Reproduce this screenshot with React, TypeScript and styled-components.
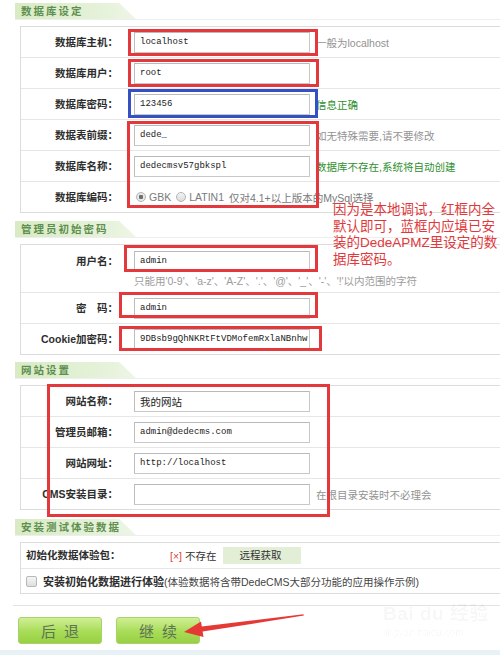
import React from "react";
import styled, { createGlobalStyle } from "styled-components";

const Global = createGlobalStyle`
  html, body { margin: 0; padding: 0; background: #fff; }
  body { width: 500px; height: 655px; overflow: hidden; }
`;

const Page = styled.div`
  position: relative;
  width: 500px;
  height: 655px;
  overflow: hidden;
  background: #fff;
  font-family: "Liberation Sans", "Noto Sans CJK SC", sans-serif;
  color: #333;
  display: flex;
  flex-direction: column;
`;

const Section = styled.section<{ $top: number }>`
  margin-top: ${(p) => p.$top}px;
  padding-left: 15px;
`;

const TabBar = styled.div`
  height: 16px;
  border-bottom: 1px solid #eeeeee;
  display: flex;
`;

const Tab = styled.h2`
  margin: 0;
  width: 121px;
  height: 16px;
  padding-left: 6px;
  box-sizing: border-box;
  background: linear-gradient(to right, #d8ebc4, #e6f2da 75%, #eef6e6);
  clip-path: polygon(0 0, 86% 0, 100% 100%, 0 100%);
  font: bold 10.5px/16px "Noto Sans CJK SC", sans-serif;
  letter-spacing: 2px;
  color: #5f8f50;
  white-space: nowrap;
`;

const Table = styled.div`
  margin: 6px 0 0 5px;
  width: 490px;
  border: 1px solid #dcdcdc;
  display: flex;
  flex-direction: column;
  background: #fff;
`;

const Row = styled.div<{ $h?: number; $pad?: number }>`
  display: flex;
  align-items: ${(p) => (p.$pad ? "flex-start" : "center")};
  height: ${(p) => p.$h ?? 30}px;
  padding-top: ${(p) => p.$pad ?? 0}px;
  & + & {
    border-top: 1px solid #e6e6e6;
  }
`;

const Label = styled.div<{ $w?: number; $left?: boolean }>`
  width: ${(p) => p.$w ?? 99}px;
  flex: none;
  box-sizing: border-box;
  padding: 0 2px 0 5px;
  text-align: ${(p) => (p.$left ? "left" : "right")};
  font: bold 10.5px/21px "Liberation Sans", "Noto Sans CJK SC", sans-serif;
  color: #2e2e2e;
  white-space: nowrap;
`;

const Value = styled.div<{ $col?: boolean; $pl?: number }>`
  display: flex;
  flex-direction: ${(p) => (p.$col ? "column" : "row")};
  align-items: ${(p) => (p.$col ? "flex-start" : "center")};
  padding-left: ${(p) => p.$pl ?? 14}px;
  white-space: nowrap;
`;

const Field = styled.div<{ $cjk?: boolean }>`
  width: 176px;
  height: 21px;
  flex: none;
  box-sizing: border-box;
  border: 1px solid #c8c8c8;
  border-top-color: #b9b9b9;
  border-left-color: #bdbdbd;
  padding-left: 5px;
  font: ${(p) =>
    p.$cjk
      ? '10.5px/19px "Noto Sans CJK SC", sans-serif'
      : '9px/19px "Liberation Mono", monospace'};
  color: #222;
  background: #fff;
  overflow: hidden;
`;

const Hint = styled.span<{ $green?: boolean }>`
  margin-left: 6px;
  font-size: 10.5px;
  color: ${(p) => (p.$green ? "#2f8f2f" : "#929292")};
  white-space: nowrap;
`;

const SubHint = styled.div`
  margin-top: 3px;
  font-size: 10.5px;
  line-height: 13px;
  color: #9c9c9c;
  white-space: nowrap;
`;

const RadioGroup = styled.div`
  display: flex;
  align-items: center;
  gap: 3px;
  margin-left: 2px;
  font-size: 10.5px;
  color: #7a7a7a;
`;

const Radio = styled.span<{ $on?: boolean }>`
  width: 8px;
  height: 8px;
  border-radius: 50%;
  border: 1px solid #b4b4b4;
  background: ${(p) =>
    p.$on
      ? "radial-gradient(circle, #6f6f6f 0 2px, #e9e9e9 2.5px)"
      : "linear-gradient(#f4f4f4, #dcdcdc)"};
  flex: none;
`;

const RadioText = styled.span`
  margin-right: 2px;
`;

const Cross = styled.span`
  color: #e0403a;
  font-size: 10.5px;
  margin-right: 3px;
`;

const Plain = styled.span`
  font-size: 10.5px;
  color: #333;
`;

const FetchButton = styled.span`
  margin-left: 7px;
  width: 78px;
  height: 17px;
  box-sizing: border-box;
  padding-left: 16px;
  background: #e3eed7;
  font-size: 10.5px;
  line-height: 17px;
  color: #333;
`;

const Check = styled.span`
  width: 9px;
  height: 9px;
  margin: 0 6px 0 5px;
  border: 1px solid #b8b8b8;
  border-radius: 2px;
  background: linear-gradient(#f6f6f6, #dedede);
  flex: none;
`;

const Strong = styled.b`
  font-size: 11px;
  color: #2e2e2e;
`;

const Normal = styled.span`
  font-size: 10.5px;
  color: #444;
`;

const Divider = styled.div`
  margin: 11px 0 0 13px;
  border-top: 1px solid #e3e3e3;
`;

const ButtonBar = styled.div`
  display: flex;
  gap: 14px;
  margin-top: 11px;
  padding-left: 18px;
`;

const GreenButton = styled.div`
  width: 84px;
  height: 27px;
  box-sizing: border-box;
  border: 1px solid #a8d36a;
  border-radius: 3px;
  background: linear-gradient(#d0ef96, #a8dc57 55%, #98d044);
  color: #5e7256;
  font: 15px/25px "Noto Sans CJK SC", sans-serif;
  letter-spacing: 8px;
  padding-left: 8px;
  text-align: center;
`;

const BottomBand = styled.div`
  margin-top: auto;
  height: 5px;
  background: #e7f1f6;
`;

const Mark = styled.div<{ $x: number; $y: number; $w: number; $h: number; $blue?: boolean }>`
  position: absolute;
  left: ${(p) => p.$x}px;
  top: ${(p) => p.$y}px;
  width: ${(p) => p.$w}px;
  height: ${(p) => p.$h}px;
  box-sizing: border-box;
  border: 3px solid ${(p) => (p.$blue ? "#3550c2" : "#e3383c")};
  pointer-events: none;
`;

const Note = styled.div`
  position: absolute;
  left: 333px;
  top: 202px;
  font: 13.5px/16.5px "Liberation Sans", "Noto Sans CJK SC", sans-serif;
  color: #e0393c;
  white-space: nowrap;
`;

const ArrowSvg = styled.svg`
  position: absolute;
  left: 180px;
  top: 606px;
`;

const Watermark = styled.div`
  position: absolute;
  left: 383px;
  top: 604px;
  color: rgba(0, 0, 0, 0.045);
  font-family: "Liberation Sans", "Noto Sans CJK SC", sans-serif;
  line-height: 1;
`;

const WmBig = styled.div`
  font-size: 19px;
  font-weight: bold;
  letter-spacing: 0.5px;
`;

const WmSmall = styled.div`
  margin-top: 5px;
  font-size: 10px;
`;

const marks = [
  { x: 128, y: 29, w: 190, h: 27 },
  { x: 128, y: 59, w: 191, h: 28 },
  { x: 128, y: 89, w: 190, h: 29, blue: true },
  { x: 127, y: 121, w: 192, h: 87 },
  { x: 124, y: 245, w: 194, h: 27 },
  { x: 119, y: 292, w: 199, h: 26 },
  { x: 119, y: 326, w: 203, h: 25 },
  { x: 47, y: 384, w: 283, h: 133 },
];

export default function App() {
  return (
    <Page>
      <Global />

      <Section $top={3}>
        <TabBar>
          <Tab>数据库设定</Tab>
        </TabBar>
        <Table>
          <Row>
            <Label>数据库主机：</Label>
            <Value>
              <Field>localhost</Field>
              <Hint>一般为localhost</Hint>
            </Value>
          </Row>
          <Row>
            <Label>数据库用户：</Label>
            <Value>
              <Field>root</Field>
            </Value>
          </Row>
          <Row>
            <Label>数据库密码：</Label>
            <Value>
              <Field>123456</Field>
              <Hint $green>信息正确</Hint>
            </Value>
          </Row>
          <Row>
            <Label>数据表前缀：</Label>
            <Value>
              <Field>dede_</Field>
              <Hint>如无特殊需要,请不要修改</Hint>
            </Value>
          </Row>
          <Row>
            <Label>数据库名称：</Label>
            <Value>
              <Field>dedecmsv57gbkspl</Field>
              <Hint $green>数据库不存在,系统将自动创建</Hint>
            </Value>
          </Row>
          <Row>
            <Label>数据库编码：</Label>
            <Value>
              <RadioGroup>
                <Radio $on />
                <RadioText>GBK</RadioText>
                <Radio />
                <RadioText>LATIN1</RadioText>
                <span>仅对4.1+以上版本的MySql选择</span>
              </RadioGroup>
            </Value>
          </Row>
        </Table>
      </Section>

      <Section $top={8}>
        <TabBar>
          <Tab>管理员初始密码</Tab>
        </TabBar>
        <Table>
          <Row $h={41} $pad={6}>
            <Label>用户名：</Label>
            <Value $col>
              <Field>admin</Field>
              <SubHint>只能用'0-9'、'a-z'、'A-Z'、'.'、'@'、'_'、'-'、'!'以内范围的字符</SubHint>
            </Value>
          </Row>
          <Row>
            <Label>密　码：</Label>
            <Value>
              <Field>admin</Field>
            </Value>
          </Row>
          <Row>
            <Label>Cookie加密码：</Label>
            <Value>
              <Field>9DBsb9gQhNKRtFtVDMofemRxlaNBnhw</Field>
            </Value>
          </Row>
        </Table>
      </Section>

      <Section $top={7}>
        <TabBar>
          <Tab>网站设置</Tab>
        </TabBar>
        <Table>
          <Row>
            <Label>网站名称：</Label>
            <Value>
              <Field $cjk>我的网站</Field>
            </Value>
          </Row>
          <Row>
            <Label>管理员邮箱：</Label>
            <Value>
              <Field>admin@dedecms.com</Field>
            </Value>
          </Row>
          <Row>
            <Label>网站网址：</Label>
            <Value>
              <Field>http://localhost</Field>
            </Value>
          </Row>
          <Row>
            <Label>CMS安装目录：</Label>
            <Value>
              <Field></Field>
              <Hint>在根目录安装时不必理会</Hint>
            </Value>
          </Row>
        </Table>
      </Section>

      <Section $top={9}>
        <TabBar>
          <Tab>安装测试体验数据</Tab>
        </TabBar>
        <Table>
          <Row $h={25}>
            <Label $w={149} $left>
              初始化数据体验包：
            </Label>
            <Value $pl={0}>
              <Cross>[×]</Cross>
              <Plain>不存在</Plain>
              <FetchButton>远程获取</FetchButton>
            </Value>
          </Row>
          <Row $h={24}>
            <Value $pl={0}>
              <Check />
              <Strong>安装初始化数据进行体验</Strong>
              <Normal>(体验数据将含带DedeCMS大部分功能的应用操作示例)</Normal>
            </Value>
          </Row>
        </Table>
      </Section>

      <Divider />
      <ButtonBar>
        <GreenButton>后退</GreenButton>
        <GreenButton>继续</GreenButton>
      </ButtonBar>
      <BottomBand />

      {marks.map((m, i) => (
        <Mark key={i} $x={m.x} $y={m.y} $w={m.w} $h={m.h} $blue={m.blue} />
      ))}

      <Note>
        因为是本地调试，红框内全
        <br />
        默认即可，蓝框内应填已安
        <br />
        装的DedeAPMZ里设定的数
        <br />
        据库密码。
      </Note>

      <Watermark>
        <WmBig>Bai du 经验</WmBig>
        <WmSmall>jingyan.baidu.com</WmSmall>
      </Watermark>

      <ArrowSvg width="130" height="40" viewBox="0 0 130 40">
        <polygon
          points="4,26 21,15.5 21.8,20.5 123.5,8.3 123.8,9.6 22.6,25.6 23.5,31"
          fill="#e53935"
        />
      </ArrowSvg>
    </Page>
  );
}
